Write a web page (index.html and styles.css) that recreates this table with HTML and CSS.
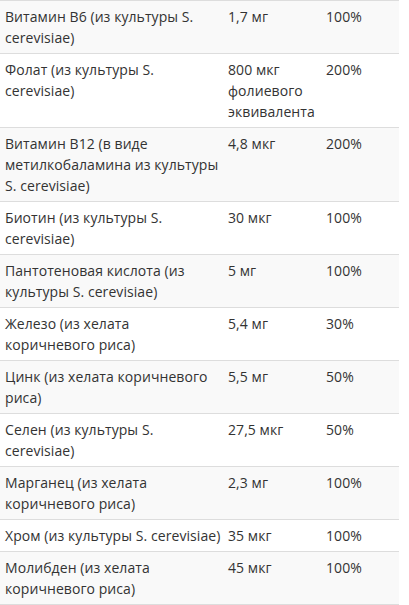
FILE: index.html
```html
<!DOCTYPE html>
<html lang="ru">
<head>
<meta charset="utf-8">
<link rel="stylesheet" href="styles.css">
</head>
<body>
<table class="nutr">
  <colgroup>
    <col class="c-name">
    <col class="c-amt">
    <col class="c-dv">
  </colgroup>
  <tbody>
    <tr><td>Витамин B6 (из культуры S. cerevisiae)</td><td>1,7 мг</td><td>100%</td></tr>
    <tr><td>Фолат (из культуры S. cerevisiae)</td><td>800 мкг фолиевого эквивалента</td><td>200%</td></tr>
    <tr><td>Витамин B12 (в виде метилкобаламина из культуры S. cerevisiae)</td><td>4,8 мкг</td><td>200%</td></tr>
    <tr><td>Биотин (из культуры S. cerevisiae)</td><td>30 мкг</td><td>100%</td></tr>
    <tr><td>Пантотеновая кислота (из культуры S. cerevisiae)</td><td>5 мг</td><td>100%</td></tr>
    <tr><td>Железо (из хелата коричневого риса)</td><td>5,4 мг</td><td>30%</td></tr>
    <tr><td>Цинк (из хелата коричневого риса)</td><td>5,5 мг</td><td>50%</td></tr>
    <tr><td>Селен (из культуры S. cerevisiae)</td><td>27,5 мкг</td><td>50%</td></tr>
    <tr><td>Марганец (из хелата коричневого риса)</td><td>2,3 мг</td><td>100%</td></tr>
    <tr><td>Хром (из культуры S. cerevisiae)</td><td>35 мкг</td><td>100%</td></tr>
    <tr><td>Молибден (из хелата коричневого риса)</td><td>45 мкг</td><td>100%</td></tr>
  </tbody>
</table>
</body>
</html>
```

FILE: styles.css
```css
html, body {
  margin: 0;
  padding: 0;
  background: #fff;
}
body {
  font-family: "Open Sans", "Noto Sans", sans-serif;
  font-size: 14px;
  line-height: 21px;
  letter-spacing: 0.07px;
  color: #333;
}
.nutr {
  width: 399px;
  border-collapse: collapse;
  table-layout: fixed;
}
.c-name { width: 223px; }
.c-amt { width: 98px; }
.c-dv { width: 78px; }
.nutr td {
  padding: 5px 2px 5px 5px;
  border-top: 1px solid #ddd;
  vertical-align: top;
  text-align: left;
}
.nutr td:first-child {
  padding-right: 0;
}
.nutr tr:last-child td {
  border-bottom: 1px solid #ddd;
}
.nutr tr:nth-child(odd) {
  background: #f9f9f9;
}
```
